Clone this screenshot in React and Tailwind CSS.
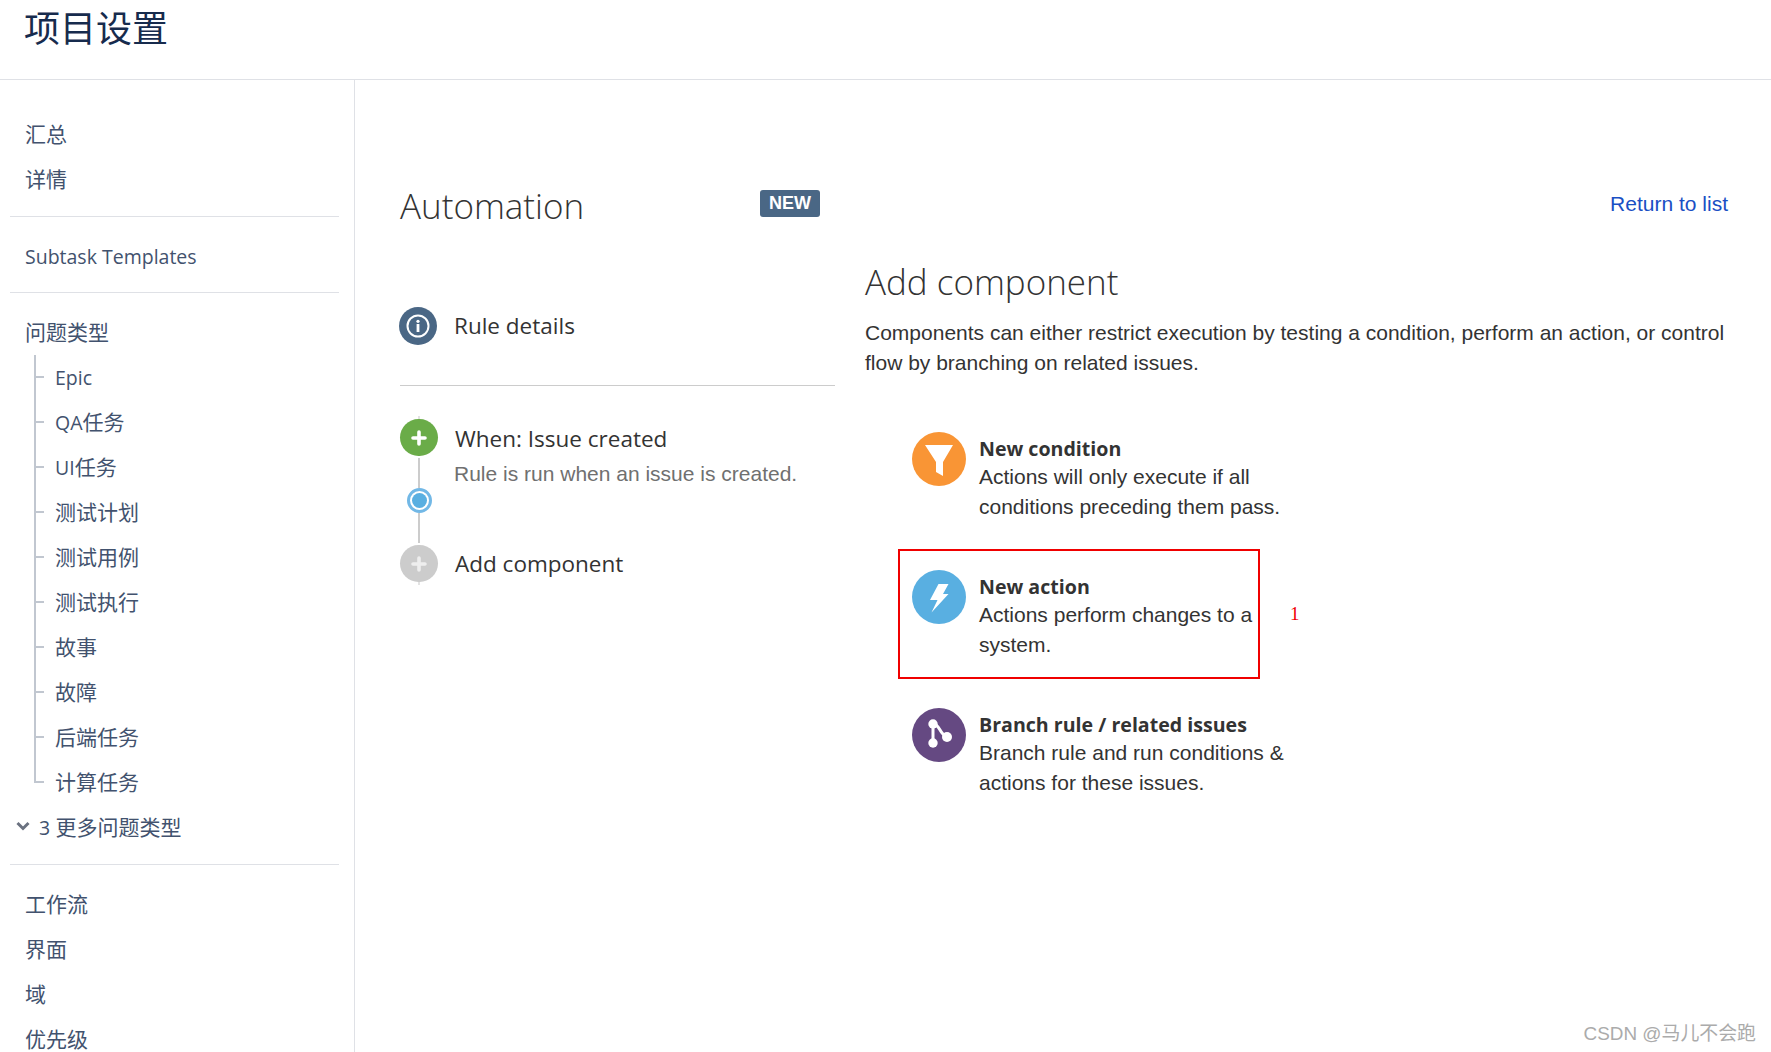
const issueTypes = [<L>Epic</L>, <><L>QA</L>任务</>, <><L>UI</L>任务</>, "测试计划", "测试用例", "测试执行", "故事", "故障", "后端任务", "计算任务"];

function L({ children }) {
  return <span className="text-[19.5px]">{children}</span>;
}

function NavItem({ children }) {
  return <div className="h-[45px] pl-[15px] flex items-center text-[21px] text-[#42526e]">{children}</div>;
}

function Divider() {
  return <div className="h-[1px] bg-[#dfe1e6]"></div>;
}

function Sidebar() {
  return (
    <div className="w-[355px] h-[972px] shrink-0 border-r border-[#dfe1e6] pl-[10px] pr-[15px] pt-[32px] overflow-hidden">
      <NavItem>汇总</NavItem>
      <NavItem>详情</NavItem>
      <div className="mt-[14px] mb-[17px]"><Divider /></div>
      <NavItem><L>Subtask Templates</L></NavItem>
      <div className="mt-[13px] mb-[17px]"><Divider /></div>
      <NavItem>问题类型</NavItem>
      <div className="pl-[24px]">
        {issueTypes.map((name, i) => (
          <div key={i} className="flex h-[45px] text-[21px] text-[#42526e]">
            <div className="w-[10px] shrink-0 flex flex-col mr-[11px]">
              <div className="h-1/2 border-l-2 border-b-2 border-[#c1c7d0]"></div>
              {i < issueTypes.length - 1 && <div className="h-1/2 border-l-2 border-[#c1c7d0]"></div>}
            </div>
            <div className="flex items-center">{name}</div>
          </div>
        ))}
      </div>
      <div className="h-[45px] pl-[6px] flex items-center text-[21px] text-[#42526e]">
        <svg width="14" height="10" viewBox="0 0 14 10" className="mr-[9px] mb-[3px]"><path d="M1.5 2l5.5 5.5L12.5 2" fill="none" stroke="#6b7280" strokeWidth="3" /></svg>
        <L>3</L>&nbsp;更多问题类型
      </div>
      <div className="mt-[14px] mb-[17px]"><Divider /></div>
      <NavItem>工作流</NavItem>
      <NavItem>界面</NavItem>
      <NavItem>域</NavItem>
      <NavItem>优先级</NavItem>
    </div>
  );
}

function Plus({ color }) {
  return (
    <svg width="16" height="16" viewBox="0 0 16 16"><path d="M8 2v12M2 8h12" stroke={color} strokeWidth="3.6" strokeLinecap="round" /></svg>
  );
}

function Timeline() {
  return (
    <div className="w-[435px]">
      <div className="flex items-center h-[40px] mt-[70px]">
        <div className="w-[38px] h-[38px] -ml-[1px] rounded-full bg-[#4a6785] flex items-center justify-center">
          <svg width="26" height="26" viewBox="0 0 26 26">
            <circle cx="13" cy="13" r="10.5" fill="none" stroke="#fff" strokeWidth="2" />
            <circle cx="13" cy="8.3" r="1.6" fill="#fff" />
            <rect x="11.6" y="11" width="2.8" height="8" fill="#fff" />
          </svg>
        </div>
        <div className="ml-[17px] text-[22.5px] text-[#333]">Rule details</div>
      </div>
      <div className="h-[1px] bg-[#cccccc] mt-[39px]"></div>

      <div className="flex mt-[30px]">
        <div className="w-[38px] shrink-0 flex flex-col items-center">
          <div className="w-[2px] h-[3px] bg-[#e3e3e3]"></div>
          <div className="w-[38px] h-[37px] rounded-full bg-[#6aac48] flex items-center justify-center"><Plus color="#fff" /></div>
          <div className="w-[2px] h-[30px] mt-[2px] bg-[#cccccc]"></div>
          <div className="w-[25px] h-[25px] rounded-full border-[3px] border-[#72b8e6] bg-white p-[2px]">
            <div className="w-full h-full rounded-full bg-[#59afe1]"></div>
          </div>
          <div className="w-[2px] h-[30px] bg-[#cccccc]"></div>
          <div className="w-[38px] h-[37px] mt-[2px] rounded-full bg-[#cccccc] flex items-center justify-center"><Plus color="#eeeeee" /></div>
          <div className="w-[2px] h-[3px] bg-[#e3e3e3]"></div>
        </div>
        <div className="ml-[17px] flex flex-col">
          <div className="h-[38px] mt-[4px] flex items-center text-[22.5px] text-[#333]">When: Issue created</div>
          <div className="mt-[1px] -ml-[1px] text-[21px] leading-[30px] font-['Liberation_Sans',sans-serif] text-[#707070]">Rule is run when an issue is created.</div>
          <div className="h-[38px] mt-[56px] flex items-center text-[22.5px] text-[#333]">Add component</div>
        </div>
      </div>
    </div>
  );
}

function Option({ color, icon, title, lines, selected }) {
  return (
    <div className={"flex w-[362px] h-[130px] border-2 pl-[12px] pt-[19px] " + (selected ? "border-[#f00000]" : "border-transparent")}>
      <div className={"w-[54px] h-[54px] shrink-0 rounded-full " + color}>{icon}</div>
      <div className="ml-[13px] text-[21px] leading-[30px] text-[#333] font-['Liberation_Sans',sans-serif] whitespace-nowrap">
        <div className="font-['Open_Sans',sans-serif] font-bold text-[19.6px] leading-[27px] mt-[3px]">{title}</div>
        {lines.map((l) => <div key={l}>{l}</div>)}
      </div>
    </div>
  );
}

function AddComponent() {
  return (
    <div className="ml-[30px] flex-1">
      <div className="text-[35px] font-light leading-[48px] text-[#333] mt-[22px]">Add component</div>
      <div className="mt-[12px] text-[21px] leading-[30px] text-[#333] font-['Liberation_Sans',sans-serif] whitespace-nowrap">
        <div>Components can either restrict execution by testing a condition, perform an action, or control</div>
        <div>flow by branching on related issues.</div>
      </div>
      <div className="mt-[33px] ml-[33px] flex flex-col gap-[8px]">
        <Option
          color="bg-[#f99535]"
          title="New condition"
          lines={["Actions will only execute if all", "conditions preceding them pass."]}
          icon={<svg width="54" height="54" viewBox="0 0 54 54"><path d="M13 13H41L31 30V44L24 40V30Z" fill="#fff" /></svg>}
        />
        <div className="flex items-center">
          <Option
            selected
            color="bg-[#59afe1]"
            title="New action"
            lines={["Actions perform changes to a", "system."]}
            icon={<svg width="54" height="54" viewBox="0 0 54 54"><path d="M26.5 14H36.5L31 24H36.5L19.5 42.5L25.5 30H18Z" fill="#fff" /></svg>}
          />
          <div className="ml-[30px] text-[19px] text-[#f00000] font-['Liberation_Serif',serif]">1</div>
        </div>
        <Option
          color="bg-[#654982]"
          title="Branch rule / related issues"
          lines={["Branch rule and run conditions &", "actions for these issues."]}
          icon={
            <svg width="54" height="54" viewBox="0 0 54 54">
              <path d="M21 16V35M21 16C28 16 27 26 35 29" fill="none" stroke="#fff" strokeWidth="3" />
              <circle cx="21" cy="16" r="4.7" fill="#fff" />
              <circle cx="21" cy="35" r="4.7" fill="#fff" />
              <circle cx="35" cy="29" r="5" fill="#fff" />
            </svg>
          }
        />
      </div>
    </div>
  );
}

export default function App() {
  return (
    <div className="relative w-[1771px] h-[1052px] bg-white overflow-hidden font-['Open_Sans','Noto_Sans_CJK_SC',sans-serif]">
      <div className="h-[80px] border-b border-[#dfe1e6] pl-[24px] pt-[5px] text-[36px] leading-[48px] text-[#172b4d]">项目设置</div>
      <div className="flex">
        <Sidebar />
        <div className="flex-1 pl-[45px] pr-[43px]">
          <div className="flex items-center h-[60px] mt-[96px]">
            <div className="w-[360px] text-[35px] font-light text-[#333]">Automation</div>
            <div className="h-[27px] w-[60px] -mt-[5px] rounded-[3px] bg-[#4a6785] text-white text-[18px] font-bold font-['Liberation_Sans',sans-serif] flex items-center justify-center">NEW</div>
            <div className="ml-auto -mt-[5px] text-[21px] text-[#1a4fc4] font-['Liberation_Sans',sans-serif]">Return to list</div>
          </div>
          <div className="flex">
            <Timeline />
            <AddComponent />
          </div>
        </div>
      </div>
      <div className="absolute right-[15px] bottom-[4px] text-[18.9px] text-[#ababab] font-['Liberation_Sans','Noto_Sans_CJK_SC',sans-serif]">CSDN @马儿不会跑</div>
    </div>
  );
}
